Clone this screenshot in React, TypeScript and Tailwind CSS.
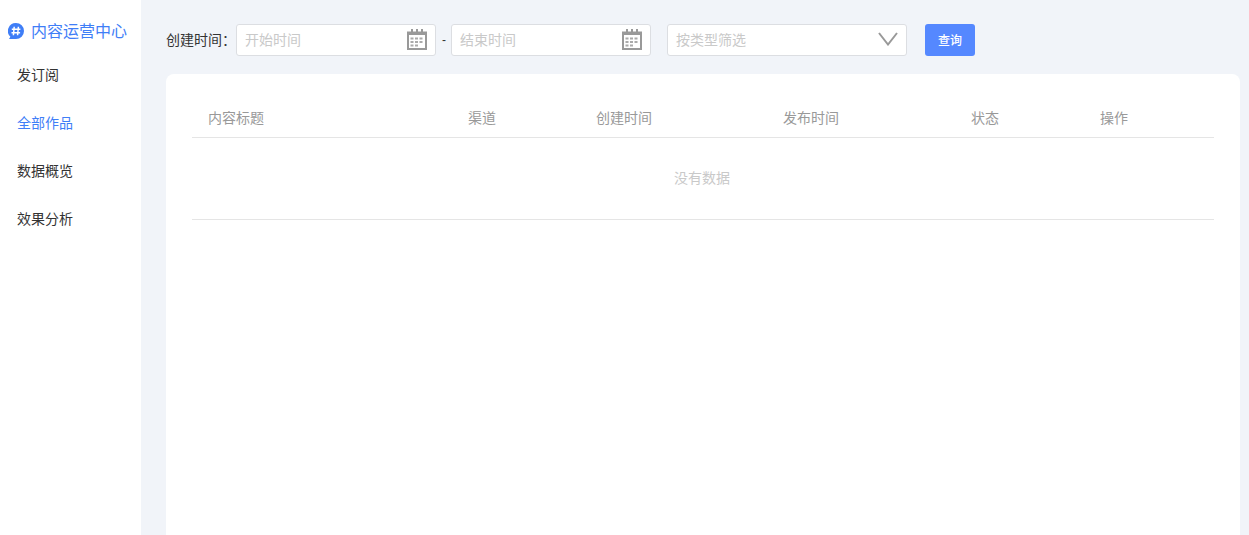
function Cal() {
  return (
    <svg width="20" height="21" viewBox="0 0 20 21" className="shrink-0 -mt-px">
      <rect x="1" y="3.5" width="18" height="16.5" fill="none" stroke="#999" strokeWidth="2" />
      <rect x="1" y="3" width="18" height="3" fill="#999" />
      <rect x="4" y="0" width="2" height="5" fill="#999" />
      <rect x="9" y="0" width="2" height="5" fill="#999" />
      <rect x="14" y="0" width="2" height="5" fill="#999" />
      {[8.5, 12, 15.5].map((y) =>
        [3.5, 8, 12.5].map((x) =>
          y === 15.5 && x === 12.5 ? null : <rect key={`${x}-${y}`} x={x} y={y} width="3" height="2" fill="#aaa" />
        )
      )}
    </svg>
  );
}
function Field({ w, text, children }: { w: string; text: string; children: React.ReactNode }) {
  return (
    <div className={`${w} h-8 shrink-0 bg-white border border-[#dcdee2] rounded-[3px] flex items-center justify-between pl-2 pr-[8px] text-sm text-[#c9c9c9]`}>
      <span>{text}</span>
      {children}
    </div>
  );
}
const nav = ["发订阅", "全部作品", "数据概览", "效果分析"];
const heads: [string, string][] = [
  ["内容标题", "w-[260px]"],
  ["渠道", "w-[128px]"],
  ["创建时间", "w-[187px]"],
  ["发布时间", "w-[188px]"],
  ["状态", "w-[129px]"],
  ["操作", "w-[100px]"],
];
export default function App() {
  return (
    <div className="flex h-[535px] overflow-hidden bg-[#f1f4f9] font-['Liberation_Sans','Noto_Sans_CJK_SC',sans-serif] text-sm">
      <aside className="w-[141px] shrink-0 bg-white">
        <div className="h-[51px] pt-[20px] pl-2 flex items-start gap-[7px] text-[#3f7ef7] text-base leading-[24px]">
          <svg width="16" height="16" viewBox="0 0 16 16" className="mt-[3px] shrink-0">
            <path d="M8 0a8 8 0 0 1 8 8 8 8 0 0 1-8 8H1l1.4-2.2A8 8 0 0 1 8 0z" fill="#3f7ef7" />
            <path d="M6.2 3.8 5.4 12.2M10.4 3.8 9.6 12.2M3.8 6.2h8.6M3.5 9.8h8.6" stroke="#fff" strokeWidth="1.5" fill="none" />
          </svg>
          <span>内容运营中心</span>
        </div>
        <nav className="flex flex-col">
          {nav.map((n, i) => (
            <div key={n} className={`h-12 pl-[17px] flex items-center ${i === 1 ? "text-[#3f7ef7]" : "text-[#333]"}`}>{n}</div>
          ))}
        </nav>
      </aside>
      <main className="flex-1 min-w-0 pl-[25px] pr-[9px] pt-6 flex flex-col">
        <div className="flex items-center h-8">
          <span className="text-[#333] w-[70px] shrink-0">创建时间：</span>
          <Field w="w-[200px]" text="开始时间"><Cal /></Field>
          <span className="w-[15px] pl-px text-center text-[#333] text-xs">-</span>
          <Field w="w-[200px]" text="结束时间"><Cal /></Field>
          <div className="w-4 shrink-0" />
          <Field w="w-[240px]" text="按类型筛选">
            <svg width="20" height="14" viewBox="0 0 20 14" className="shrink-0 -mt-[2px]"><path d="M1 1l9 11.5L19 1" fill="none" stroke="#999" strokeWidth="2" /></svg>
          </Field>
          <button className="ml-[18px] w-[50px] h-8 bg-[#5588ff] text-white text-xs font-medium rounded-[3px] pt-[2px]">查询</button>
        </div>
        <section className="mt-[18px] flex-1 bg-white rounded-t-lg px-[26px] pt-[26px]">
          <div className="flex h-[38px] pb-[2px] items-center border-b border-[#e5e5e5] pl-4 text-[#999]">
            {heads.map(([t, w]) => <div key={t} className={`${w} shrink-0`}>{t}</div>)}
          </div>
          <div className="h-[82px] pb-[2px] pr-[2px] flex items-center justify-center border-b border-[#e5e5e5] text-[#c9c9c9]">没有数据</div>
        </section>
      </main>
    </div>
  );
}
